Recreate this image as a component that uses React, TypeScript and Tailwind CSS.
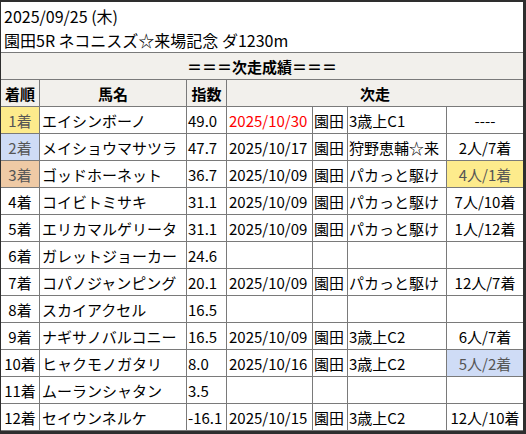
import React from "react";

type Row = {
  rank: string;
  rankBg?: string;
  name: string;
  idx: string;
  date?: string;
  dateRed?: boolean;
  place?: string;
  race?: string;
  result?: string;
  resultBg?: string;
};

const rows: Row[] = [
  { rank: "1着", rankBg: "bg-[#fdeb8c]", name: "エイシンボーノ", idx: "49.0", date: "2025/10/30", dateRed: true, place: "園田", race: "3歳上C1", result: "----" },
  { rank: "2着", rankBg: "bg-[#cfdcf6]", name: "メイショウマサツラ", idx: "47.7", date: "2025/10/17", place: "園田", race: "狩野恵輔☆来", result: "2人/7着" },
  { rank: "3着", rankBg: "bg-[#efcaa5]", name: "ゴッドホーネット", idx: "36.7", date: "2025/10/09", place: "園田", race: "パカっと駆け", result: "4人/1着", resultBg: "bg-[#fdeb8c]" },
  { rank: "4着", name: "コイビトミサキ", idx: "31.1", date: "2025/10/09", place: "園田", race: "パカっと駆け", result: "7人/10着" },
  { rank: "5着", name: "エリカマルゲリータ", idx: "31.1", date: "2025/10/09", place: "園田", race: "パカっと駆け", result: "1人/12着" },
  { rank: "6着", name: "ガレットジョーカー", idx: "24.6" },
  { rank: "7着", name: "コパノジャンピング", idx: "20.1", date: "2025/10/09", place: "園田", race: "パカっと駆け", result: "12人/7着" },
  { rank: "8着", name: "スカイアクセル", idx: "16.5" },
  { rank: "9着", name: "ナギサノバルコニー", idx: "16.5", date: "2025/10/09", place: "園田", race: "3歳上C2", result: "6人/7着" },
  { rank: "10着", name: "ヒャクモノガタリ", idx: "8.0", date: "2025/10/16", place: "園田", race: "3歳上C2", result: "5人/2着", resultBg: "bg-[#cfdcf6]" },
  { rank: "11着", name: "ムーランシャタン", idx: "3.5" },
  { rank: "12着", name: "セイウンネルケ", idx: "-16.1", date: "2025/10/15", place: "園田", race: "3歳上C2", result: "12人/10着" },
];

const font = { fontFamily: '"Noto Sans CJK JP", "Noto Sans", sans-serif' };

export default function App() {
  return (
    <div
      className="w-[526px] h-[434px] bg-white border-t-2 border-l border-r-[3px] border-b-[3px] border-[#2e2e2e] text-[15px] text-black leading-none overflow-hidden"
      style={font}
    >
      <div className="h-[51px] border-b border-[#7a7a7a] px-[3px] pt-[5px] flex flex-col gap-[6px] text-[16px]">
        <div className="h-[18px] flex items-center">2025/09/25 (木)</div>
        <div className="h-[18px] flex items-center">園田5R ネコニスズ☆来場記念 ダ1230m</div>
      </div>
      <div className="grid grid-cols-[38px_146px_39px_85px_34px_98px_76px] auto-rows-[26px] gap-px bg-[#7a7a7a] pb-px">
        <div className="col-span-7 bg-[#f2f0ec] flex items-center justify-center font-bold">
          ＝＝＝次走成績＝＝＝
        </div>
        <div className="bg-[#f2f0ec] flex items-center justify-center font-bold">着順</div>
        <div className="bg-[#f2f0ec] flex items-center justify-center font-bold">馬名</div>
        <div className="bg-[#f2f0ec] flex items-center justify-center font-bold">指数</div>
        <div className="col-span-4 bg-[#f2f0ec] flex items-center justify-center font-bold">次走</div>
        {rows.map((r, i) => (
          <React.Fragment key={i}>
            <div className={`${r.rankBg ?? "bg-white"} flex items-center justify-center ${r.rankBg ? "text-[#555]" : ""}`}>
              {r.rank}
            </div>
            <div className="bg-white flex items-center pl-[2px] whitespace-nowrap overflow-hidden">{r.name}</div>
            <div className="bg-white flex items-center pl-px whitespace-nowrap overflow-hidden">{r.idx}</div>
            <div className={`bg-white flex items-center pl-[2px] whitespace-nowrap ${r.dateRed ? "text-[#ff0000]" : ""}`}>
              {r.date ?? ""}
            </div>
            <div className="bg-white flex items-center pl-px whitespace-nowrap">{r.place ?? ""}</div>
            <div className="bg-white flex items-center pl-px whitespace-nowrap overflow-hidden">{r.race ?? ""}</div>
            <div className={`${r.resultBg ?? "bg-white"} flex items-center justify-center whitespace-nowrap ${r.resultBg ? "text-[#555]" : ""}`}>
              {r.result ?? ""}
            </div>
          </React.Fragment>
        ))}
      </div>
    </div>
  );
}
